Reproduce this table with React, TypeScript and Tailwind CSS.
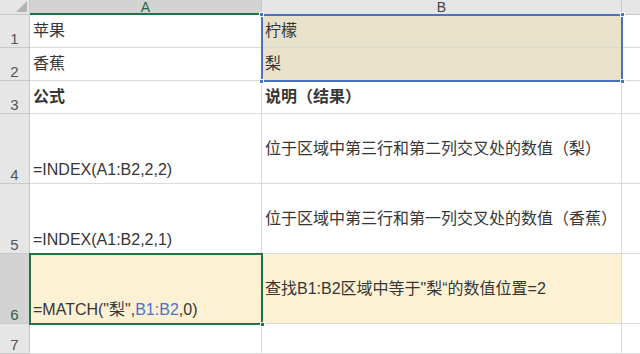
import React from 'react';

const FONT = { fontFamily: '"Liberation Sans", "Noto Sans CJK SC", sans-serif' };

type Row = {
  h: string;
  a: React.ReactNode;
  b: React.ReactNode;
  bold?: boolean;
  alignA: 'center' | 'end';
  fillA?: string;
  fillB?: string;
  selected?: boolean;
};

const rows: Row[] = [
  { h: 'h-[33px]', a: '苹果', b: '柠檬', alignA: 'center', fillB: 'bg-[#e9e2cb]' },
  { h: 'h-[33px]', a: '香蕉', b: '梨', alignA: 'center', fillB: 'bg-[#e9e2cb]' },
  { h: 'h-[33px]', a: '公式', b: '说明（结果）', bold: true, alignA: 'center' },
  { h: 'h-[70px]', a: '=INDEX(A1:B2,2,2)', b: '位于区域中第三行和第二列交叉处的数值（梨）', alignA: 'end' },
  { h: 'h-[70px]', a: '=INDEX(A1:B2,2,1)', b: '位于区域中第三行和第一列交叉处的数值（香蕉）', alignA: 'end' },
  {
    h: 'h-[70px]',
    a: (
      <>
        =MATCH("梨",<span className="text-[#4a72c4]">B1:B2</span>,0)
      </>
    ),
    b: '查找B1:B2区域中等于"梨“的数值位置=2',
    alignA: 'end',
    fillA: 'bg-[#fdf1d4]',
    fillB: 'bg-[#fdf1d4]',
    selected: true,
  },
  { h: 'h-[30px]', a: '', b: '', alignA: 'end' },
];

const Handle: React.FC<{ className: string; color: string }> = ({ className, color }) => (
  <div className={`absolute w-[5px] h-[5px] ${color} border border-white ${className}`} />
);

export default function App() {
  return (
    <div className="relative w-[640px] h-[354px] overflow-hidden bg-white text-[#363636]" style={FONT}>
      {/* column headers */}
      <div className="flex h-[15px]">
        <div className="w-[30px] shrink-0 bg-[#e6e6e6] border-r border-b border-[#c8c8c8] relative">
          <svg className="absolute right-[2px] bottom-[2px]" width="11" height="11" viewBox="0 0 11 11">
            <polygon points="11,0 11,11 0,11" fill="#b4b4b4" />
          </svg>
        </div>
        <div className="w-[232px] shrink-0 bg-[#d3d3d3] border-r border-[#c8c8c8] border-b-2 border-b-[#217346] flex items-center justify-center text-[14px] leading-none text-[#2f5f45]">
          A
        </div>
        <div className="w-[360px] shrink-0 bg-[#e6e6e6] border-r border-b border-[#c8c8c8] flex items-center justify-center text-[14px] leading-none text-[#444]">
          B
        </div>
        <div className="flex-1 bg-[#e6e6e6] border-b border-[#c8c8c8]" />
      </div>

      {rows.map((r, i) => (
        <div key={i} className={`flex ${r.h}`}>
          <div
            className={`w-[30px] shrink-0 border-r border-b border-[#c8c8c8] flex items-end justify-center pb-[1px] text-[15px] leading-none ${
              r.selected ? 'bg-[#d3d3d3] text-[#2f5f45]' : 'bg-[#e6e6e6] text-[#555]'
            }`}
          >
            {i + 1}
          </div>
          <div
            className={`w-[232px] shrink-0 border-r border-b border-[#dadada] flex px-[3px] text-[16px] whitespace-nowrap ${
              r.alignA === 'center' ? 'items-center' : 'items-end pb-[1px]'
            } ${r.bold ? 'font-bold' : ''} ${r.fillA ?? ''}`}
          >
            {r.a}
          </div>
          <div
            className={`w-[360px] shrink-0 border-r border-b border-[#dadada] flex items-center px-[3px] text-[16px] whitespace-nowrap ${
              r.bold ? 'font-bold' : ''
            } ${r.fillB ?? ''}`}
          >
            {r.b}
          </div>
          <div className="flex-1 border-b border-[#dadada]" />
        </div>
      ))}

      {/* B1:B2 reference highlight */}
      <div className="absolute left-[261px] top-[14px] w-[362px] h-[68px] border-2 border-[#4a72c4] pointer-events-none">
        <Handle className="-left-[4px] -top-[4px]" color="bg-[#4a72c4]" />
        <Handle className="-right-[4px] -top-[4px]" color="bg-[#4a72c4]" />
        <Handle className="-left-[4px] -bottom-[4px]" color="bg-[#4a72c4]" />
        <Handle className="-right-[4px] -bottom-[4px]" color="bg-[#4a72c4]" />
      </div>

      {/* active cell A6 */}
      <div className="absolute left-[29px] top-[253px] w-[234px] h-[72px] border-2 border-[#217346] pointer-events-none">
        <Handle className="-right-[4px] -bottom-[4px]" color="bg-[#217346]" />
      </div>
    </div>
  );
}
